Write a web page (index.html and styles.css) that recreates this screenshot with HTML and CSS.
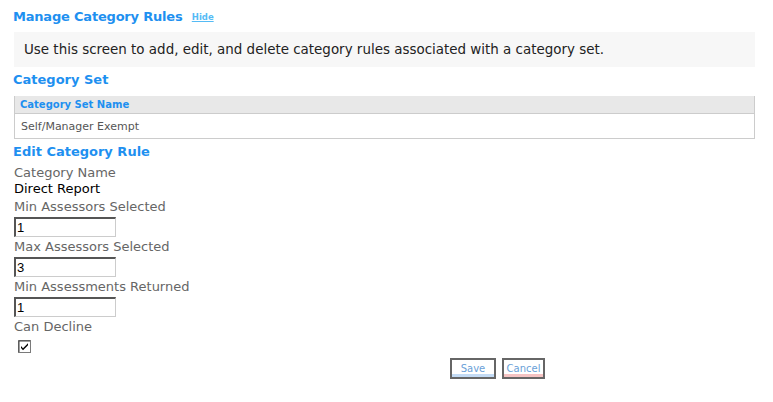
FILE: index.html
```html
<!DOCTYPE html>
<html lang="en">
	<head>
		<meta charset="UTF-8" />
		<title>Manage Category Rules</title>
		<link rel="stylesheet" href="styles.css">
	</head>
	<body>
		<div class="page">
			<h2 class="title">Manage Category Rules <a href="javascript:;" class="hide">Hide</a></h2>
			<div class="intro">Use this screen to add, edit, and delete category rules associated with a category set.</div>

			<h3 class="section">Category Set</h3>
			<table class="grid">
				<tr>
					<th>Category Set Name</th>
				</tr>
				<tr>
					<td>Self/Manager Exempt</td>
				</tr>
			</table>

			<h3 class="section">Edit Category Rule</h3>
			<div class="form">
				<div class="label first">Category Name</div>
				<div class="value">Direct Report</div>
				<div class="label">Min Assessors Selected</div>
				<input type="text" class="field" value="1" />
				<div class="label">Max Assessors Selected</div>
				<input type="text" class="field" value="3" />
				<div class="label">Min Assessments Returned</div>
				<input type="text" class="field" value="1" />
				<div class="label">Can Decline</div>
				<span class="check">
					<svg width="13" height="13" viewBox="0 0 13 13">
						<rect x="0.5" y="0.5" width="12" height="12" fill="#fff" stroke="#7a7a7a" />
						<path d="M1 12V1h11" fill="none" stroke="#404040" />
						<path d="M3 6l2 2.2L10 3.3v2L5 10.3 3 8z" fill="#000" />
					</svg>
				</span>
			</div>

			<div class="buttons">
				<a href="javascript:;" class="btn save">Save</a>
				<a href="javascript:;" class="btn cancel">Cancel</a>
			</div>
		</div>
	</body>
</html>
```

FILE: styles.css
```css
* {
	margin: 0;
	padding: 0;
}

body {
	font-family: "DejaVu Sans", Verdana, sans-serif;
	background-color: #fff;
	color: #222;
}

.page {
	padding: 8px 18px 0 13px;
}

.title {
	font-size: 13px;
	font-weight: bold;
	color: #1e90f0;
	line-height: 18px;
	letter-spacing: -0.2px;
}

.title .hide {
	font-size: 8.5px;
	font-weight: bold;
	color: #55bbf5;
	margin-left: 5px;
	letter-spacing: 0;
	vertical-align: 1px;
}

.intro {
	margin: 6px 0 0 1px;
	background-color: #f7f7f7;
	font-size: 13.45px;
	line-height: 35px;
	padding-left: 10px;
	color: #222;
}

.section {
	font-size: 13px;
	font-weight: bold;
	color: #1e90f0;
	line-height: 18px;
	margin-top: 4px;
}

.grid {
	width: calc(100% - 1px);
	margin: 6px 0 3px 1px;
	border: 1px solid #ccc;
	border-collapse: collapse;
}

.grid th {
	background-color: #e8e8e8;
	color: #1e90f0;
	text-align: left;
	font-size: 10px;
	font-weight: bold;
	height: 17px;
	padding-left: 5px;
	border-bottom: 1px solid #ccc;
	border-top: 1px solid #fff;
}

.grid td {
	color: #555;
	font-size: 11px;
	height: 24px;
	padding-left: 6px;
}

.form {
	display: flex;
	flex-direction: column;
	align-items: flex-start;
	margin: 4px 0 0 1px;
	font-size: 13px;
}

.form .label {
	color: #666;
	line-height: 16px;
	margin-top: 2px;
}

.form .label.first {
	margin-top: 0;
}

.form .value {
	color: #000;
	line-height: 16px;
}

.form .field {
	width: 102px;
	height: 20px;
	box-sizing: border-box;
	margin-top: 2px;
	border-style: solid;
	border-width: 2px 1px 1px 2px;
	border-color: #555 #ccc #ccc #555;
	font-family: "Liberation Sans", Arial, sans-serif;
	font-size: 13px;
	padding-left: 1px;
	color: #000;
}

.form .check {
	display: block;
	height: 13px;
	margin: 5px 0 0 4px;
}

.buttons {
	display: flex;
	gap: 6px;
	margin-top: 5px;
	padding-left: 437px;
}

.btn {
	display: block;
	box-sizing: border-box;
	height: 21px;
	border: 2px solid #666;
	font-size: 10px;
	line-height: 17px;
	text-decoration: none;
	color: #6a9fd8;
	text-align: center;
	background-color: #fff;
}

.save {
	width: 46px;
	box-shadow: inset 0 -3px 0 #c3dbf5;
}

.cancel {
	width: 43px;
	box-shadow: inset 0 -3px 0 #f5c3c3;
}
```
